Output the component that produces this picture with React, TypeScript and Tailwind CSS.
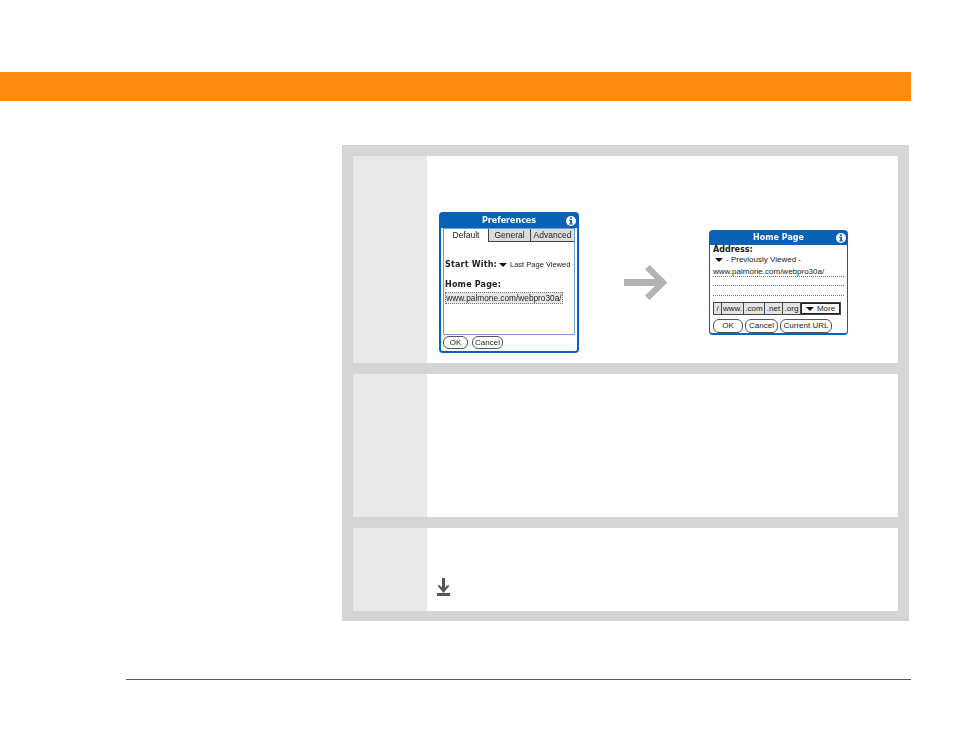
const font = { fontFamily: '"DejaVu Sans", sans-serif' };
const thinFont = { fontFamily: '"Liberation Sans", sans-serif' };

const InfoIcon = () => (
  <svg width="10" height="10" viewBox="0 0 10 10" className="shrink-0">
    <circle cx="5" cy="5" r="5" fill="#fff" />
    <rect x="4" y="1.5" width="2" height="1.6" fill="#0a62b8" />
    <path d="M3.2 4H6v3.4h1v1H3.2v-1h1V5h-1z" fill="#0a62b8" />
  </svg>
);

const Caret = () => (
  <svg width="8" height="4" viewBox="0 0 8 4" className="shrink-0">
    <path d="M0 0h8L4 4z" fill="#111" />
  </svg>
);

const PalmButton = ({ label, width, height }: { label: string; width: string; height: string }) => (
  <div style={thinFont} className={`${width} ${height} border border-[#555] rounded-[6px] flex items-center justify-center text-[8px] leading-none text-[#222] bg-white`}>
    {label}
  </div>
);

const TitleBar = ({ title }: { title: string }) => (
  <div className="relative h-[14px] flex items-center justify-center text-white text-[8px] font-bold leading-none">
    {title}
    <div className="absolute right-[1px] top-[2px]">
      <InfoIcon />
    </div>
  </div>
);

const PreferencesDialog = () => (
  <div className="w-[140px] h-[141px] mt-[56px] rounded-[4px] bg-[#0a62b8] p-[2px] shrink-0 blur-[0.3px]">
    <TitleBar title="Preferences" />
    <div className="bg-white h-[123px] rounded-b-[2px] px-[2px] pt-0 text-[#222]">
      <div className="h-[107px] border border-[#6f9fd8]">
        <div style={thinFont} className="flex h-[13px] text-[8.5px] leading-none">
          <div className="w-[44px] flex items-center justify-center">Default</div>
          <div className="w-[42px] flex items-center justify-center bg-[#dcdcdc] border-l border-b border-[#444]">General</div>
          <div className="flex-1 flex items-center justify-center bg-[#dcdcdc] border-l border-b border-[#444]">Advanced</div>
        </div>
        <div className="flex items-center mt-[19px] ml-[1px] text-[8px] leading-none whitespace-nowrap">
          <span className="font-bold tracking-[0.2px]">Start With:</span>
          <span className="ml-[2px]"><Caret /></span>
          <span style={thinFont} className="ml-[3px] text-[7.5px]">Last Page Viewed</span>
        </div>
        <div className="mt-[12px] ml-[1px] text-[8px] font-bold tracking-[0.2px] leading-none">Home Page:</div>
        <div style={thinFont} className="mt-[3px] ml-[1px] w-[118px] h-[12px] bg-[#e6e6e6] border border-dotted border-[#777] flex items-center justify-center text-[8.3px] leading-none whitespace-nowrap">
          www.palmone.com/webpro30a/
        </div>
      </div>
      <div className="flex gap-[4px] mt-[1px]">
        <PalmButton label="OK" width="w-[25px]" height="h-[13px]" />
        <PalmButton label="Cancel" width="w-[31px]" height="h-[13px]" />
      </div>
    </div>
  </div>
);

const KeyCell = ({ label, width }: { label: string; width: string }) => (
  <div className={`${width} flex items-center justify-center bg-[#e4e4e4] border-r border-[#444]`}>{label}</div>
);

const HomePageDialog = () => (
  <div className="w-[139px] h-[105px] mt-[74px] rounded-[4px] bg-[#0a62b8] px-[1px] pt-[1px] pb-[2px] shrink-0 blur-[0.3px]">
    <TitleBar title="Home Page" />
    <div style={thinFont} className="bg-white h-[88px] rounded-b-[2px] px-[3px] text-[#222] text-[8px] leading-none">
      <div style={font} className="pt-[1px] text-[8px] font-bold">Address:</div>
      <div className="flex items-center mt-[2px] ml-[2px] whitespace-nowrap">
        <Caret />
        <span className="ml-[3px]">- Previously Viewed -</span>
      </div>
      <div className="mt-[4px] h-[9px] border-b border-dotted border-[#777] whitespace-nowrap">www.palmone.com/webpro30a/</div>
      <div className="h-[9px] border-b border-dotted border-[#777]" />
      <div className="h-[10px] border-b border-dotted border-[#777]" />
      <div className="flex h-[13px] mt-[6px] w-[128px] border border-[#444]">
        <KeyCell label="/" width="w-[8px]" />
        <KeyCell label="www." width="w-[22px]" />
        <KeyCell label=".com" width="w-[21px]" />
        <KeyCell label=".net" width="w-[18px]" />
        <KeyCell label=".org" width="w-[18px]" />
        <div className="flex-1 flex items-center justify-center gap-[3px] border border-[#222]">
          <Caret />
          More
        </div>
      </div>
      <div className="flex gap-[2px] mt-[4px]">
        <PalmButton label="OK" width="w-[30px]" height="h-[14px]" />
        <PalmButton label="Cancel" width="w-[33px]" height="h-[14px]" />
        <PalmButton label="Current URL" width="w-[52px]" height="h-[14px]" />
      </div>
    </div>
  </div>
);

const ArrowIcon = () => (
  <svg width="44" height="35" viewBox="0 0 44 35" className="mt-[109px] ml-[45px] mr-[41px] shrink-0">
    <path d="M0 14h31L21 4.500 25.500 0 43.500 17.500 25.500 35 21 30.500 31 21H0z" fill="#b3b3b3" />
  </svg>
);

const DownloadIcon = () => (
  <svg width="13" height="18" viewBox="0 0 13 18">
    <path d="M5 0h3v9.500L11.200 6.800 12.200 8 6.500 15 0.800 8 1.800 6.800 5 9.500z" fill="#555" />
    <rect x="0" y="15" width="13" height="3" fill="#555" />
  </svg>
);

const StepRow = ({ height, children }: { height: string; children?: React.ReactNode }) => (
  <div className={`flex ${height}`}>
    <div className="w-[74px] shrink-0 bg-[#e8e8e8]" />
    <div className="flex-1 bg-white pl-[12px]">{children}</div>
  </div>
);

export default function App() {
  return (
    <div className="min-h-[737px] bg-white pt-[72px]" style={font}>
      <div className="h-[29px] w-[911px] bg-[#fe8a10]" />
      <div className="ml-[342px] mt-[44px] w-[567px] bg-[#d5d5d5] px-[11px] pt-[11px] pb-[10px] flex flex-col gap-[11px]">
        <StepRow height="h-[207px]">
          <div className="flex items-start">
            <PreferencesDialog />
            <ArrowIcon />
            <HomePageDialog />
          </div>
        </StepRow>
        <StepRow height="h-[143px]" />
        <StepRow height="h-[83px]">
          <div className="pt-[50px] -ml-[2px]">
            <DownloadIcon />
          </div>
        </StepRow>
      </div>
      <div className="ml-[126px] mt-[58px] w-[785px] h-px bg-[#555]" />
    </div>
  );
}
